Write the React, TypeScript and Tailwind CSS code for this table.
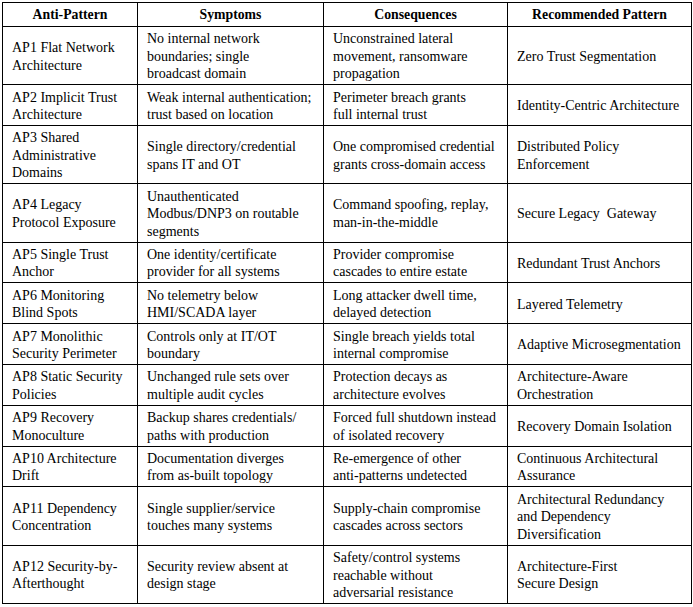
import React from "react";

const headers = ["Anti-Pattern", "Symptoms", "Consequences", "Recommended Pattern"];

const rows: string[][][] = [
  [["AP1 Flat Network", "Architecture"], ["No internal network", "boundaries; single", "broadcast domain"], ["Unconstrained lateral", "movement, ransomware", "propagation"], ["Zero Trust Segmentation"]],
  [["AP2 Implicit Trust", "Architecture"], ["Weak internal authentication;", "trust based on location"], ["Perimeter breach grants", "full internal trust"], ["Identity-Centric Architecture"]],
  [["AP3 Shared", "Administrative", "Domains"], ["Single directory/credential", "spans IT and OT"], ["One compromised credential", "grants cross-domain access"], ["Distributed Policy", "Enforcement"]],
  [["AP4 Legacy", "Protocol Exposure"], ["Unauthenticated", "Modbus/DNP3 on routable", "segments"], ["Command spoofing, replay,", "man-in-the-middle"], ["Secure Legacy\u00a0 Gateway"]],
  [["AP5 Single Trust", "Anchor"], ["One identity/certificate", "provider for all systems"], ["Provider compromise", "cascades to entire estate"], ["Redundant Trust Anchors"]],
  [["AP6 Monitoring", "Blind Spots"], ["No telemetry below", "HMI/SCADA layer"], ["Long attacker dwell time,", "delayed detection"], ["Layered Telemetry"]],
  [["AP7 Monolithic", "Security Perimeter"], ["Controls only at IT/OT", "boundary"], ["Single breach yields total", "internal compromise"], ["Adaptive Microsegmentation"]],
  [["AP8 Static Security", "Policies"], ["Unchanged rule sets over", "multiple audit cycles"], ["Protection decays as", "architecture evolves"], ["Architecture-Aware", "Orchestration"]],
  [["AP9 Recovery", "Monoculture"], ["Backup shares credentials/", "paths with production"], ["Forced full shutdown instead", "of isolated recovery"], ["Recovery Domain Isolation"]],
  [["AP10 Architecture", "Drift"], ["Documentation diverges", "from as-built topology"], ["Re-emergence of other", "anti-patterns undetected"], ["Continuous Architectural", "Assurance"]],
  [["AP11 Dependency", "Concentration"], ["Single supplier/service", "touches many systems"], ["Supply-chain compromise", "cascades across sectors"], ["Architectural Redundancy", "and Dependency", "Diversification"]],
  [["AP12 Security-by-", "Afterthought"], ["Security review absent at", "design stage"], ["Safety/control systems", "reachable without", "adversarial resistance"], ["Architecture-First", "Secure Design"]],
];

export default function App() {
  return (
    <div className="min-h-screen bg-white pt-[2px] pl-[2px] text-black font-['Liberation_Serif','Times_New_Roman',serif]">
      <div className="grid w-[690px] grid-cols-[134px_185px_183px_183px] gap-px bg-black p-px text-[14px] leading-[17.5px]">
        {headers.map((h) => (
          <div
            key={h}
            className="flex items-center justify-center bg-white py-[2.75px] text-[13.75px] font-bold whitespace-nowrap"
          >
            {h}
          </div>
        ))}
        {rows.map((row, ri) =>
          row.map((cell, ci) => (
            <div
              key={`${ri}-${ci}`}
              className="flex flex-col justify-center bg-white pt-[3.3px] pb-[1.5px] pl-[9px] whitespace-nowrap"
            >
              {cell.map((line, li) => (
                <span key={li} className="block">
                  {line}
                </span>
              ))}
            </div>
          ))
        )}
      </div>
    </div>
  );
}
